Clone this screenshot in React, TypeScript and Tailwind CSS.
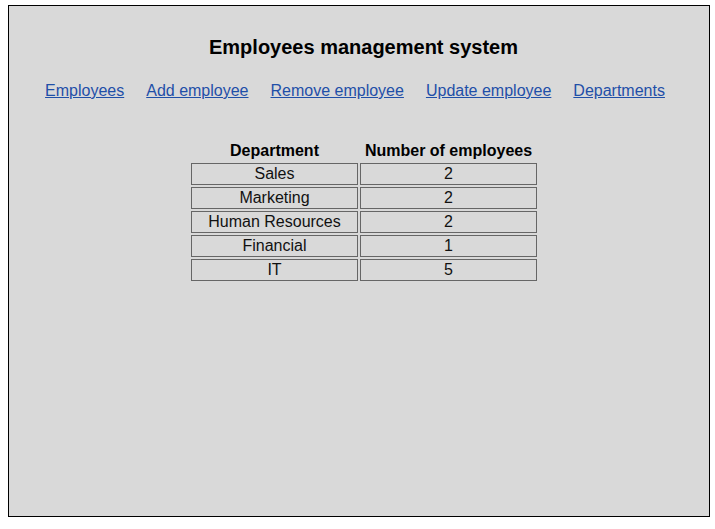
import React from "react";

const links = ["Employees", "Add employee", "Remove employee", "Update employee", "Departments"];
const rows: [string, string][] = [
  ["Sales", "2"],
  ["Marketing", "2"],
  ["Human Resources", "2"],
  ["Financial", "1"],
  ["IT", "5"],
];

export default function App() {
  return (
    <div className="w-[715px] h-[529px] bg-white pl-[8px] pt-[5px]" style={{ fontFamily: '"Liberation Sans", Arial, sans-serif' }}>
      <div className="w-[702px] h-[512px] border border-black bg-[#d9d9d9] flex flex-col items-center">
        <h1 className="mt-[25px] ml-[9px] text-[20px] leading-[32px] font-bold text-black">Employees management system</h1>
        <nav className="mt-[17px] flex gap-[22px] text-[16px] leading-[22px] -ml-[8px]">
          {links.map((l) => (
            <a key={l} href="#" className="text-[#1f4fa8] underline">{l}</a>
          ))}
        </nav>
        <table className="mt-[37px] ml-[10px] border-separate border-spacing-[2px] text-[16px] text-[#111]">
          <thead>
            <tr>
              <th className="font-bold leading-[20px] p-0 text-black">Department</th>
              <th className="font-bold leading-[20px] p-0 text-black">Number of employees</th>
            </tr>
          </thead>
          <tbody>
            {rows.map(([d, n]) => (
              <tr key={d}>
                <td className="w-[167px] h-[22px] border border-[#666] text-center p-0 leading-[20px]">{d}</td>
                <td className="w-[177px] h-[22px] border border-[#666] text-center p-0 leading-[20px]">{n}</td>
              </tr>
            ))}
          </tbody>
        </table>
      </div>
    </div>
  );
}
